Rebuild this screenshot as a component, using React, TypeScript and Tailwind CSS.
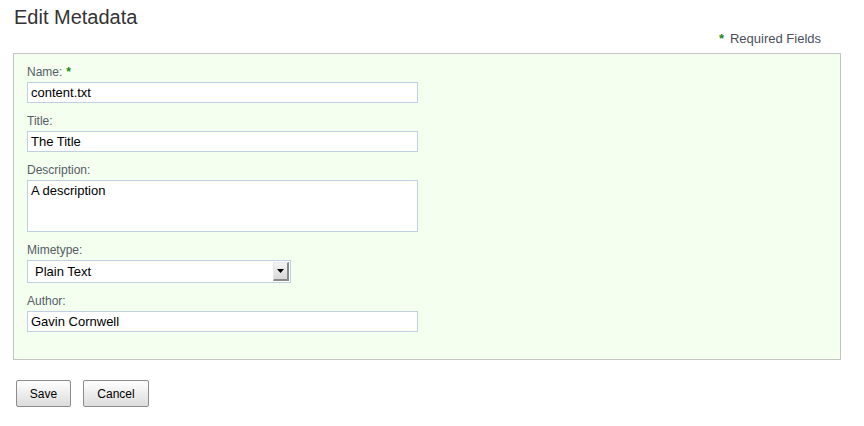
import React from "react";

const Field = ({
  label,
  required,
  children,
}: {
  label: string;
  required?: boolean;
  children: React.ReactNode;
}) => (
  <div className="mb-[11px]">
    <div className="text-[12px] leading-[15px] h-[15px] text-[#555d66] mb-[2px]">
      {label}
      {required && <span className="text-[#1a8a1a] ml-[4px] font-bold">*</span>}
    </div>
    {children}
  </div>
);

const inputCls =
  "block w-[391px] h-[21px] border border-[#bfd0e0] bg-white px-[3px] text-[13px] leading-[19px] text-black";

const App = () => {
  return (
    <div
      className="min-h-screen bg-white pl-[13px] pt-[5px] w-[864px]"
      style={{ fontFamily: '"Liberation Sans", Arial, sans-serif' }}
    >
      <h1 className="text-[20px] leading-[24px] text-[#333] pl-[1px]">Edit Metadata</h1>

      <div className="w-[828px] mt-[2px] mb-[7px] pr-[20px] text-right text-[13px] leading-[15px] h-[15px] text-[#4a4f5a]">
        <span className="text-[#1a8a1a] font-bold mr-[6px]">*</span>Required Fields
      </div>

      <div className="w-[828px] border border-[#c4c4c4] bg-[#f4fff0] pt-[11px] pb-[16px] px-[13px]">
        <Field label="Name:" required>
          <div className={inputCls}>content.txt</div>
        </Field>
        <Field label="Title:">
          <div className={inputCls}>The Title</div>
        </Field>
        <Field label="Description:">
          <div className="block w-[391px] h-[52px] border border-[#bfd0e0] bg-white px-[3px] pt-[1px] text-[13px] leading-[17px] text-black">
            A description
          </div>
        </Field>
        <Field label="Mimetype:">
          <div className="flex items-center w-[264px] h-[23px] border border-[#bfd0e0] bg-white pl-[7px] pr-[1px] text-[13px] text-black">
            <span className="flex-1">Plain Text</span>
            <div className="w-[16px] h-[19px] flex items-center justify-center bg-gradient-to-b from-[#f4f4f4] to-[#d8d8d8] border-r-2 border-b-2 border-[#8a8a8a] border-l border-t border-l-[#e8e8e8] border-t-[#e8e8e8]">
              <svg width="7" height="4" viewBox="0 0 7 4">
                <path d="M0 0h7L3.5 4z" fill="#000" />
              </svg>
            </div>
          </div>
        </Field>
        <Field label="Author:">
          <div className={inputCls}>Gavin Cornwell</div>
        </Field>
      </div>

      <div className="flex gap-[12px] pl-[3px] mt-[20px]">
        <button className="w-[55px] h-[27px] border border-[#8c8c8c] rounded-[2px] bg-gradient-to-b from-white to-[#dcdcdc] text-[12px] text-black">
          Save
        </button>
        <button className="w-[66px] h-[27px] border border-[#8c8c8c] rounded-[2px] bg-gradient-to-b from-white to-[#dcdcdc] text-[12px] text-black">
          Cancel
        </button>
      </div>
    </div>
  );
};

export default App;
